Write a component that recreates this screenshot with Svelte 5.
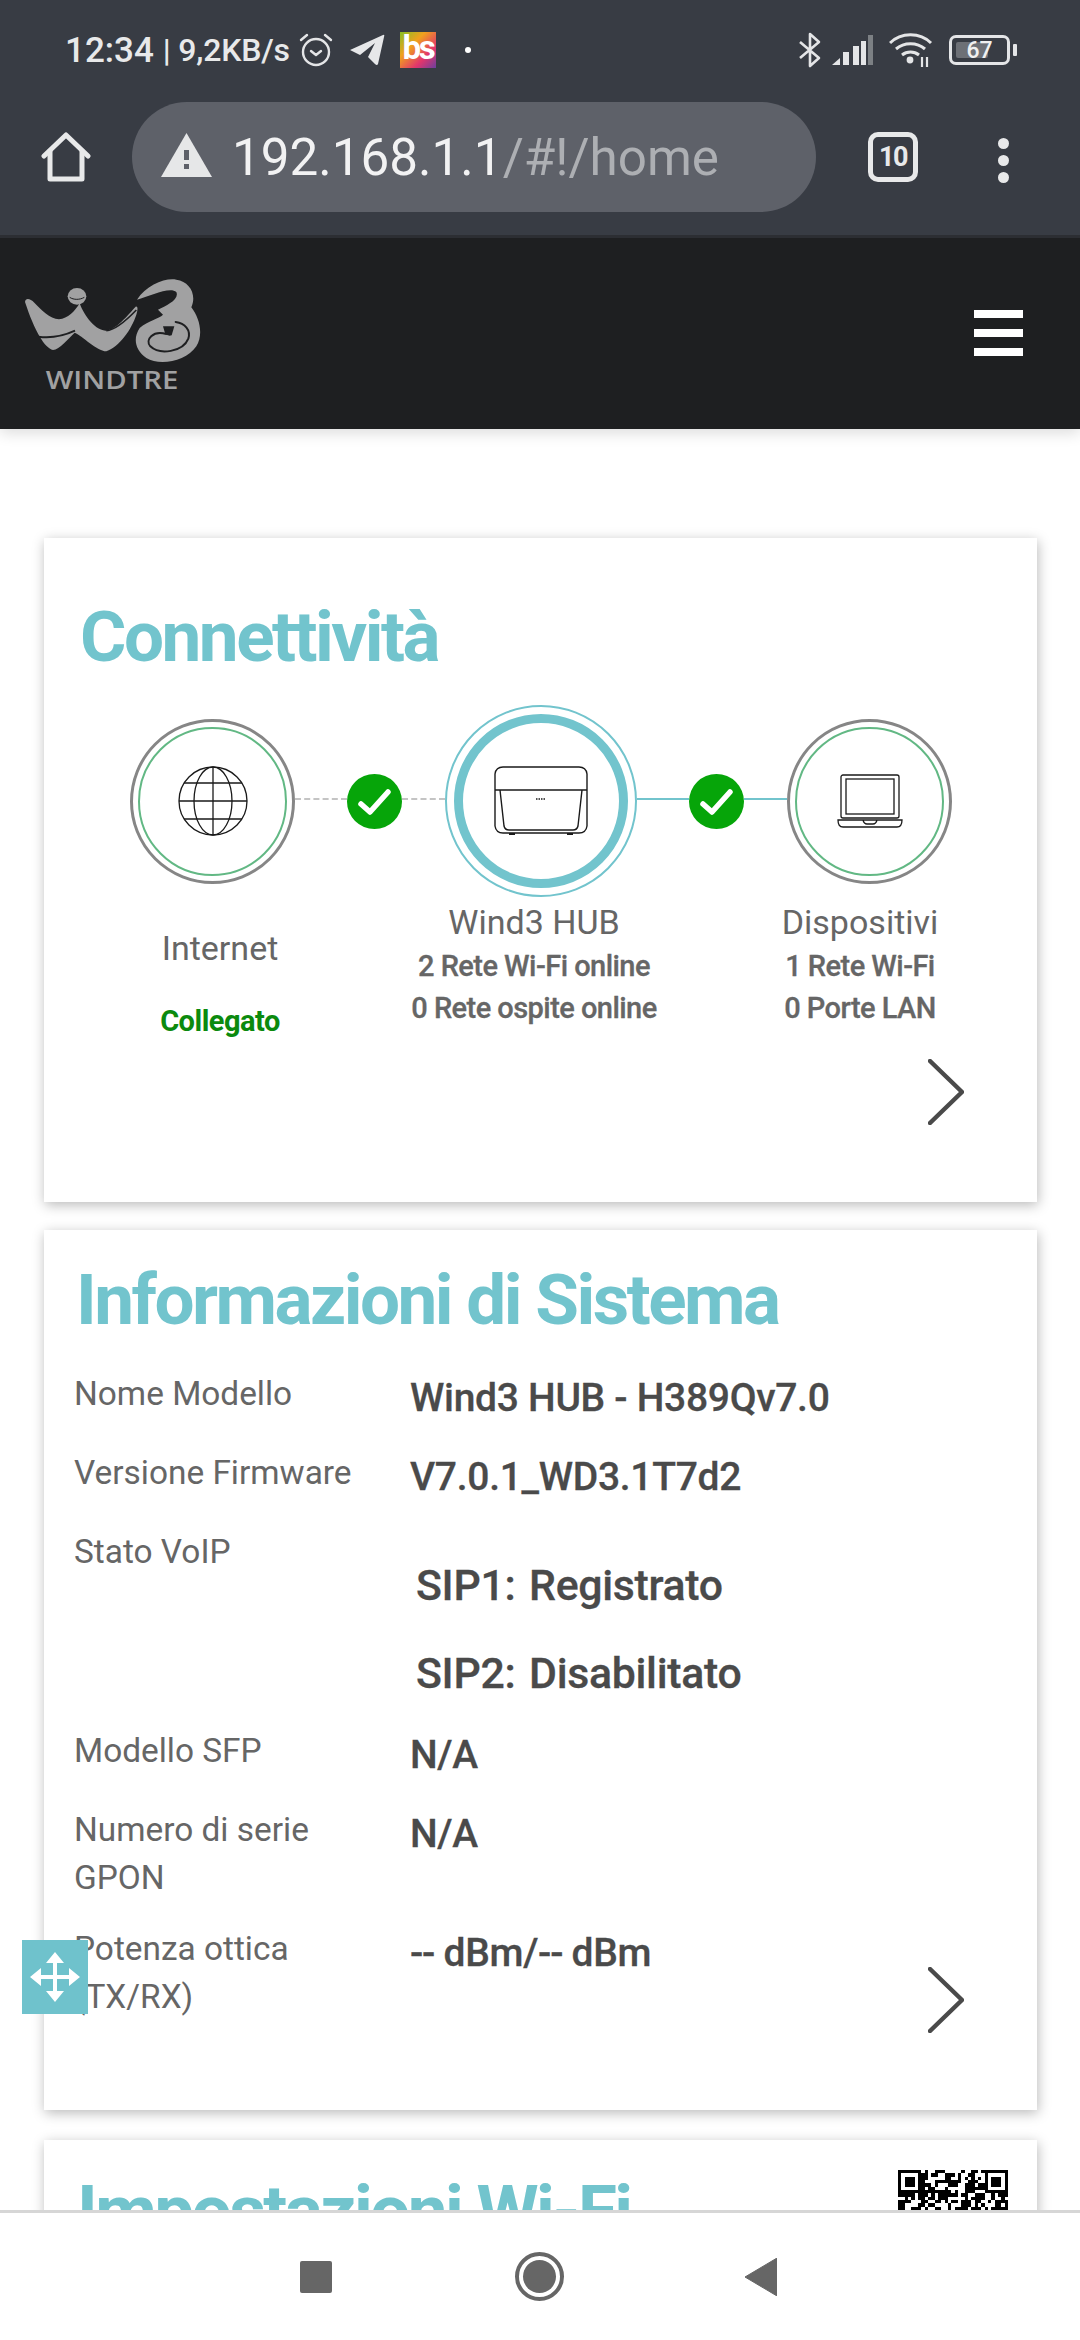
<script lang="ts">
	// qr is decorative here, same cells on every run
	const qrSize = 33;

	function isFinder(x: number, y: number) {
		const inBox = (ox: number, oy: number) => x >= ox && x < ox + 7 && y >= oy && y < oy + 7;
		return inBox(0, 0) || inBox(qrSize - 7, 0);
	}

	function finderOn(x: number, y: number) {
		const ox = x < 7 ? 0 : qrSize - 7;
		const dx = x - ox;
		const dy = y;
		if (dx === 0 || dx === 6 || dy === 0 || dy === 6) return true;
		return dx >= 2 && dx <= 4 && dy >= 2 && dy <= 4;
	}

	const qrCells: { x: number; y: number }[] = [];
	let seed = 7;
	for (let y = 0; y < 14; y++) {
		for (let x = 0; x < qrSize; x++) {
			seed = (seed * 1103515245 + 12345) & 0x7fffffff;
			const on = isFinder(x, y) ? finderOn(x, y) : (seed >> 16) % 100 < 56;
			if (on) qrCells.push({ x, y });
		}
	}
</script>

<div class="screen">
	<div class="chrome">
		<div class="status">
			<div class="status-left">
				<span class="time">12:34</span>
				<span class="speed">| 9,2KB/s</span>
				<svg class="ic-alarm" width="36" height="36" viewBox="0 0 36 36" fill="none" stroke="#e4e5e7" stroke-width="2.4">
					<circle cx="18" cy="20" r="13" />
					<path d="M13 19l5 4 5-4" stroke-linecap="round" stroke-linejoin="round" />
					<path d="M3 8l6-5M33 8l-6-5" stroke-linecap="round" />
				</svg>
				<svg class="ic-telegram" width="36" height="32" viewBox="0 0 36 32">
					<path d="M1 16 L34 1 Q36 0 35 3 L29 30 Q28 32 26 30 L19 23 L26 9 L11 21 Z" fill="#e6e7e9" />
				</svg>
				<span class="bs">bs</span>
				<span class="status-dot"></span>
			</div>
			<div class="status-right">
				<svg width="24" height="36" viewBox="0 0 24 36" fill="none" stroke="#e4e5e7" stroke-width="2.6">
					<path d="M2 10l19 16-9 8V2l9 8L2 26" stroke-linejoin="round" />
				</svg>
				<svg class="ic-signal" width="42" height="30" viewBox="0 0 42 30" fill="#e4e5e7">
					<path d="M0 30l8-7v7z" />
					<rect x="11" y="17" width="6" height="13" />
					<rect x="21" y="11" width="6" height="19" />
					<rect x="29" y="6" width="5" height="24" />
					<rect x="36" y="0" width="5" height="30" opacity="0.4" />
				</svg>
				<svg class="ic-wifi" width="44" height="36" viewBox="0 0 44 36" fill="none" stroke="#e4e5e7" stroke-width="3">
					<path d="M1 11C12 0 31 0 42 11M7 17c8-7 21-7 29 0M13 23c5-4 12-4 17 0" />
					<circle cx="21" cy="28" r="3.4" fill="#e4e5e7" stroke="none" />
					<path d="M33 25v10M38 25v10" stroke-width="2.2" />
				</svg>
				<div class="battery">
					<span class="battery-level"></span>
					<span class="battery-num">67</span>
				</div>
				<span class="battery-nub"></span>
			</div>
		</div>
		<div class="toolbar">
			<svg class="ic-home" width="50" height="50" viewBox="0 0 50 50" fill="none" stroke="#e8e9ea" stroke-width="5" stroke-linejoin="round" stroke-linecap="round">
				<path d="M3 24L25 3l22 21" />
				<path d="M9 19v28h32V19" />
			</svg>
			<div class="url">
				<svg width="51" height="44" viewBox="0 0 51 44">
					<path d="M25.5 0L51 44H0z" fill="#e6e7e8" />
					<rect x="23" y="17" width="5" height="10" fill="#5e6169" />
					<rect x="23" y="31" width="5" height="5" fill="#5e6169" />
				</svg>
				<span class="url-text">192.168.1.1<span class="url-path">/#!/home</span></span>
			</div>
			<div class="tabs">10</div>
			<div class="dots"><span></span><span></span><span></span></div>
		</div>
	</div>

	<main class="page">
		<header class="site-head">
			<svg class="logo" width="180" height="120" viewBox="70 140 540 360" fill="#a1a1a2">
				<path d="M76 212C78 198 92 202 104 214C125 236 150 262 178 264C205 262 225 240 240 216C248 240 280 296 318 298C350 296 385 250 408 226C416 224 414 238 410 250C395 295 360 345 320 360C290 358 250 315 225 304C205 322 180 355 160 356C135 350 105 300 76 212Z" />
				<path d="M116 316C160 322 200 310 226 298" fill="none" stroke="#1e1f21" stroke-width="6" />
				<path d="M320 298C350 296 385 262 410 236" fill="none" stroke="#1e1f21" stroke-width="5" />
				<ellipse cx="232" cy="195" rx="28" ry="25" />
				<path d="M210 198c12 8 30 8 44 0" fill="none" stroke="#1e1f21" stroke-width="3" />
				<path d="M412 205C440 160 500 138 530 145C570 150 592 190 575 228C600 260 612 310 590 345C560 390 480 405 440 380C405 355 400 320 420 290C445 268 478 262 490 250L475 235C500 222 540 205 530 182C510 165 450 195 412 205Z" />
				<path d="M500 308C460 296 435 325 452 345C480 372 550 362 566 322C574 296 556 276 528 272" fill="none" stroke="#1e1f21" stroke-width="6" stroke-linecap="round" />
				<path d="M490 285L524 285L516 312Q505 316 496 306Z" fill="#1e1f21" />
				<text x="138" y="472" class="logo-word" textLength="398" lengthAdjust="spacingAndGlyphs">WINDTRE</text>
			</svg>
			<div class="burger"><span></span><span></span><span></span></div>
		</header>

		<section class="card connect">
			<h2>Connettività</h2>
			<div class="diagram">
				<div class="node">
					<svg width="70" height="70" viewBox="0 0 70 70" fill="none" stroke="#1a1a1a" stroke-width="1.3">
						<circle cx="35" cy="35" r="34" />
						<ellipse cx="35" cy="35" rx="19" ry="34" />
						<path d="M35 1v68M1 35h68M6 17h58M6 53h58" />
					</svg>
				</div>
				<span class="link dashed short"></span>
				<svg class="check" width="55" height="55" viewBox="0 0 55 55">
					<circle cx="27.5" cy="27.5" r="27.5" fill="#06a509" />
					<path d="M14 30l9 8 18-20" fill="none" stroke="#fff" stroke-width="5.5" stroke-linecap="round" stroke-linejoin="round" />
				</svg>
				<span class="link dashed long"></span>
				<div class="node hub">
					<svg width="94" height="70" viewBox="0 0 94 70" fill="none" stroke="#1a1a1a" stroke-width="1.4">
						<path d="M9 1h76q7 0 8 7v52q-1 7-8 7H9q-7 0-8-7V8q1-7 8-7z" />
						<path d="M1 24h92M6 24l4 36q1 4 5 4h64q4 0 5-4l4-36" />
						<path d="M42 33h9" stroke-width="1.6" stroke-dasharray="1.5 1" />
						<path d="M15 68h6M73 68h6" stroke-width="2" />
					</svg>
				</div>
				<span class="link solid short"></span>
				<svg class="check" width="55" height="55" viewBox="0 0 55 55">
					<circle cx="27.5" cy="27.5" r="27.5" fill="#06a509" />
					<path d="M14 30l9 8 18-20" fill="none" stroke="#fff" stroke-width="5.5" stroke-linecap="round" stroke-linejoin="round" />
				</svg>
				<span class="link solid long"></span>
				<div class="node">
					<svg width="66" height="54" viewBox="0 0 66 54" fill="none" stroke="#1a1a1a" stroke-width="1.3">
						<rect x="4" y="1" width="58" height="43" rx="2" />
						<rect x="9" y="5" width="48" height="35" />
						<path d="M1 46h64q0 7-5 7H6q-5 0-5-7zM26 46q1 4 4 4h6q3 0 4-4" />
					</svg>
				</div>
			</div>
			<div class="captions">
				<div class="cap cap-internet">
					<div class="cap-name">Internet</div>
					<div class="cap-ok">Collegato</div>
				</div>
				<div class="cap cap-hub">
					<div class="cap-name">Wind3 HUB</div>
					<div class="cap-sub">2 Rete Wi-Fi online</div>
					<div class="cap-sub">0 Rete ospite online</div>
				</div>
				<div class="cap cap-dev">
					<div class="cap-name">Dispositivi</div>
					<div class="cap-sub">1 Rete Wi-Fi</div>
					<div class="cap-sub">0 Porte LAN</div>
				</div>
			</div>
			<svg class="chevron" width="36" height="66" viewBox="0 0 36 66" fill="none" stroke="#4a4a4a" stroke-width="4.5" stroke-linecap="round" stroke-linejoin="round">
				<path d="M2 2l32 31L2 64" />
			</svg>
		</section>

		<section class="card system">
			<h2>Informazioni di Sistema</h2>
			<div class="row">
				<div class="label">Nome Modello</div>
				<div class="value">Wind3 HUB - H389Qv7.0</div>
			</div>
			<div class="row">
				<div class="label">Versione Firmware</div>
				<div class="value">V7.0.1_WD3.1T7d2</div>
			</div>
			<div class="row voip">
				<div class="label">Stato VoIP</div>
				<div class="sip-list">
					<div class="sip"><span class="sip-key">SIP1:</span>Registrato</div>
					<div class="sip"><span class="sip-key">SIP2:</span>Disabilitato</div>
				</div>
			</div>
			<div class="row">
				<div class="label">Modello SFP</div>
				<div class="value">N/A</div>
			</div>
			<div class="row">
				<div class="label">Numero di serie<br />GPON</div>
				<div class="value">N/A</div>
			</div>
			<div class="row">
				<div class="label">Potenza ottica<br />(TX/RX)</div>
				<div class="value"><span class="dash">--</span> dBm/<span class="dash">--</span> dBm</div>
			</div>
			<svg class="chevron" width="36" height="66" viewBox="0 0 36 66" fill="none" stroke="#4a4a4a" stroke-width="4.5" stroke-linecap="round" stroke-linejoin="round">
				<path d="M2 2l32 31L2 64" />
			</svg>
		</section>

		<section class="card wifi">
			<h2>Impostazioni Wi-Fi</h2>
			<svg class="qr" width="110" height="110" viewBox="0 0 33 33" shape-rendering="crispEdges">
				{#each qrCells as c}
					<rect x={c.x} y={c.y} width="1" height="1" fill="#000" />
				{/each}
			</svg>
		</section>

		<button class="move" type="button" aria-label="Sposta">
			<svg width="50" height="50" viewBox="0 0 50 50" fill="#fff">
				<path d="M25 0l9 11H16zM25 50l9-11H16zM0 25l11-9v18zM50 25l-11-9v18z" />
				<rect x="23" y="9" width="4" height="32" />
				<rect x="9" y="23" width="32" height="4" />
			</svg>
		</button>
	</main>

	<nav class="nav">
		<span class="nav-square"></span>
		<span class="nav-circle"><span></span></span>
		<svg width="32" height="38" viewBox="0 0 32 38"><path d="M0 19L32 0v38z" fill="#666" stroke="#666" stroke-width="1" stroke-linejoin="round" /></svg>
	</nav>
</div>

<style>
	:global(body) {
		margin: 0;
		background: #fff;
	}

	.screen {
		width: 1080px;
		height: 2340px;
		display: flex;
		flex-direction: column;
		overflow: hidden;
		font-family: Roboto, "Noto Sans", sans-serif;
	}

	.chrome {
		height: 238px;
		flex-shrink: 0;
		background: #383c44;
		border-bottom: 3px solid #2c2e33;
		box-sizing: border-box;
		color: #e8e9ea;
	}

	.status {
		height: 100px;
		display: flex;
		justify-content: space-between;
		align-items: center;
		padding: 0 63px 0 65px;
	}

	.status-left,
	.status-right {
		display: flex;
		align-items: center;
	}

	.time {
		font-size: 35px;
		font-weight: 500;
		margin-right: 9px;
	}

	.speed {
		font-size: 32px;
		font-weight: 500;
		letter-spacing: -0.2px;
	}

	.ic-alarm {
		margin-left: 8px;
	}

	.ic-telegram {
		margin-left: 15px;
	}

	.bs {
		width: 36px;
		height: 36px;
		margin-left: 15px;
		background: linear-gradient(135deg, #86bf24 0%, #f0a01e 35%, #e2356c 70%, #6c3f9e 100%);
		color: #fff;
		font-size: 33px;
		font-weight: 700;
		line-height: 32px;
		text-align: center;
		letter-spacing: -2.5px;
	}

	.status-dot {
		width: 6px;
		height: 6px;
		border-radius: 50%;
		background: #fff;
		margin-left: 29px;
	}

	.ic-signal {
		margin-left: 10px;
	}

	.ic-wifi {
		margin-left: 15px;
	}

	.battery {
		width: 61px;
		height: 30px;
		margin-left: 16px;
		box-sizing: border-box;
		border: 3px solid #e4e5e7;
		border-radius: 7px;
		display: flex;
		align-items: center;
		justify-content: center;
		position: relative;
	}

	.battery-level {
		position: absolute;
		left: 4px;
		top: 4px;
		bottom: 4px;
		width: 32px;
		background: #6d7076;
		border-radius: 2px;
	}

	.battery-num {
		position: relative;
		font-size: 23px;
		font-weight: 500;
		color: #f0f0f0;
	}

	.battery-nub {
		width: 4px;
		height: 12px;
		margin-left: 3px;
		background: #e4e5e7;
		border-radius: 1px;
	}

	.toolbar {
		height: 134px;
		display: flex;
		align-items: flex-start;
		padding-left: 41px;
	}

	.ic-home {
		margin-top: 32px;
	}

	.url {
		width: 684px;
		height: 110px;
		margin: 2px 0 0 41px;
		padding-left: 29px;
		box-sizing: border-box;
		border-radius: 55px;
		background: #5e6169;
		display: flex;
		align-items: center;
	}

	.url svg {
		margin-top: -4px;
	}

	.url-text {
		margin-left: 20px;
		font-size: 51.2px;
		font-weight: 400;
		color: #f2f2f3;
		white-space: nowrap;
	}

	.url-path {
		color: #adafb3;
	}

	.tabs {
		width: 50px;
		height: 50px;
		margin: 32px 0 0 52px;
		box-sizing: border-box;
		border: 5px solid #e8e9ea;
		border-radius: 10px;
		font-size: 27px;
		font-weight: 700;
		line-height: 40px;
		text-align: center;
		letter-spacing: -1.5px;
	}

	.dots {
		margin: 38px 0 0 80px;
		display: flex;
		flex-direction: column;
		gap: 6px;
	}

	.dots span {
		width: 11px;
		height: 11px;
		border-radius: 50%;
		background: #e8e9ea;
	}

	.page {
		flex: 1;
		min-height: 0;
		overflow: hidden;
		position: relative;
		color: #666;
	}

	.site-head {
		height: 191px;
		background: #1e1f21;
		box-shadow: 0 4px 14px rgba(0, 0, 0, 0.14);
		display: flex;
		align-items: flex-start;
		justify-content: space-between;
		padding: 40px 57px 0 23px;
		box-sizing: border-box;
	}

	.logo-word {
		font-family: "Open Sans", sans-serif;
		font-size: 76px;
		font-weight: 600;
	}

	.burger {
		width: 49px;
		margin-top: 32px;
		display: flex;
		flex-direction: column;
		gap: 11px;
	}

	.burger span {
		height: 8px;
		background: #fff;
	}

	.card {
		position: relative;
		margin: 0 43px 28px 44px;
		background: #fff;
		box-shadow: 1px 3px 12px rgba(0, 0, 0, 0.28);
		box-sizing: border-box;
	}

	h2 {
		margin: 0;
		font-size: 71px;
		font-weight: 700;
		line-height: 72px;
		color: #72c4cd;
		letter-spacing: -2.5px;
	}

	.chevron {
		position: absolute;
		right: 73px;
	}

	.connect {
		margin-top: 109px;
		height: 664px;
		padding: 63px 0 0 36px;
	}

	.connect .chevron {
		top: 521px;
	}

	.diagram {
		margin: 32px 0 0 50px;
		display: flex;
		align-items: center;
		height: 192px;
	}

	.node {
		width: 165px;
		height: 165px;
		flex-shrink: 0;
		box-sizing: border-box;
		border: 3px solid #868686;
		border-radius: 50%;
		display: flex;
		align-items: center;
		justify-content: center;
		position: relative;
	}

	.node::before {
		content: "";
		position: absolute;
		inset: 5px;
		border: 2px solid #62b884;
		border-radius: 50%;
	}

	.hub {
		width: 192px;
		height: 192px;
		border: 2px solid #72c4cd;
	}

	.hub::before {
		inset: 7px;
		border: 9px solid #72c4cd;
	}

	.link {
		height: 0;
		margin-top: -5px;
	}

	.short {
		width: 52px;
	}

	.long {
		width: 43px;
	}

	.dashed {
		border-top: 2px dashed #c4c4c4;
	}

	.solid {
		border-top: 2px solid #72c4cd;
	}

	.captions {
		display: flex;
		margin: 2px 0 0 0;
	}

	.cap {
		text-align: center;
		flex-shrink: 0;
	}

	.cap-internet {
		width: 240px;
		margin-left: 20px;
		padding-top: 26px;
		box-sizing: border-box;
	}

	.cap-hub {
		width: 388px;
	}

	.cap-dev {
		width: 240px;
		margin-left: 12px;
	}

	.cap-name {
		font-size: 34px;
		line-height: 46px;
	}

	.cap-ok {
		margin-top: 30px;
		font-size: 29px;
		font-weight: 700;
		line-height: 40px;
		color: #0b8a0e;
		letter-spacing: -0.5px;
	}

	.cap-sub {
		font-size: 29px;
		font-weight: 500;
		line-height: 42px;
		letter-spacing: -0.55px;
		-webkit-text-stroke: 0.3px #666;
	}

	.system {
		height: 880px;
		padding: 34px 0 0 32px;
	}

	.system .chevron {
		top: 737px;
	}

	.system h2 {
		margin-bottom: 34px;
	}

	.row {
		display: flex;
		align-items: flex-start;
		margin-left: -2px;
		padding-bottom: 23px;
	}

	.label {
		width: 336px;
		flex-shrink: 0;
		font-size: 33.4px;
		line-height: 48px;
	}

	.value,
	.sip {
		font-size: 39px;
		font-weight: 500;
		line-height: 56px;
		color: #4a4a4a;
		letter-spacing: -0.3px;
		-webkit-text-stroke: 0.3px #4a4a4a;
	}

	.dash {
		letter-spacing: -1.2px;
	}

	.voip {
		padding-bottom: 0;
	}

	.sip-list {
		margin: 29px 0 -6px 6px;
	}

	.sip {
		display: flex;
		height: 88px;
		align-items: flex-start;
		font-size: 42.8px;
	}

	.sip-key {
		width: 113px;
	}

	.wifi {
		height: 200px;
		margin-top: 30px;
		padding: 35px 0 0 33px;
	}

	.qr {
		position: absolute;
		top: 30px;
		right: 29px;
	}

	.move {
		position: absolute;
		left: 22px;
		top: 1702px;
		width: 66px;
		height: 74px;
		padding: 0;
		border: 0;
		background: #6fc2cc;
		display: flex;
		align-items: center;
		justify-content: center;
	}

	.nav {
		height: 130px;
		flex-shrink: 0;
		box-sizing: border-box;
		background: #fff;
		border-top: 3px solid #d6d6d6;
		display: flex;
		align-items: center;
		padding: 0 0 0 300px;
		position: relative;
	}

	.nav-square {
		width: 32px;
		height: 32px;
		border-radius: 2px;
		background: #666;
	}

	.nav-circle {
		width: 49px;
		height: 49px;
		margin-left: 183px;
		box-sizing: border-box;
		border: 4px solid #666;
		border-radius: 50%;
		display: flex;
		align-items: center;
		justify-content: center;
	}

	.nav-circle span {
		width: 33px;
		height: 33px;
		border-radius: 50%;
		background: #666;
	}

	.nav svg {
		margin-left: 181px;
	}
</style>
